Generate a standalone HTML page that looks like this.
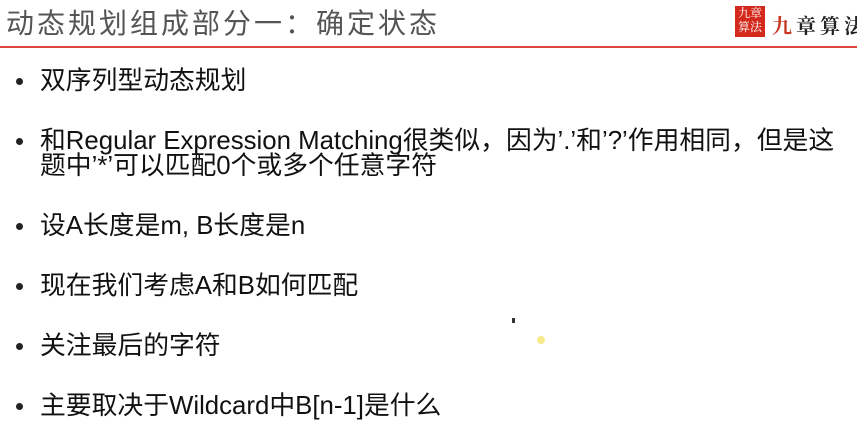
<!DOCTYPE html>
<html><head><meta charset="utf-8"><style>
html,body{margin:0;padding:0;}
body{width:857px;height:436px;background:#fff;position:relative;overflow:hidden;font-family:"Liberation Sans","Noto Sans CJK SC",sans-serif;color:#111;}
.t{position:absolute;left:6px;top:2px;font-size:28px;color:#555;letter-spacing:3px;white-space:nowrap;}
.rl{position:absolute;left:0;top:46px;width:857px;height:2px;background:#e0463c;}
.l{position:absolute;left:40px;font-size:25.8px;white-space:nowrap;line-height:25px;}
.b{position:absolute;left:16px;width:7px;height:7px;border-radius:50%;background:#222;}
.seal{position:absolute;left:735px;top:6px;width:30px;height:31px;background:#d42a1d;color:#fff;font-family:"Noto Serif CJK SC",serif;font-size:12px;line-height:14px;text-align:center;}
.logo{position:absolute;left:772px;top:10px;font-family:"Noto Serif CJK SC",serif;font-size:20px;font-weight:bold;color:#222;letter-spacing:4px;white-space:nowrap;}
</style></head><body>
<div class="t">动态规划组成部分一：确定状态</div>
<div class="seal">九章<br>算法</div>
<div class="logo"><span style="color:#c6361f">九</span>章算法</div>
<div class="rl"></div>

<div class="b" style="top:78px"></div><div class="l" style="top:69px">双序列型动态规划</div>
<div class="b" style="top:138px"></div><div class="l" style="top:129px">和Regular Expression Matching很类似，因为’.’和’?’作用相同，但是这</div>
<div class="l" style="top:154px">题中’*’可以匹配0个或多个任意字符</div>
<div class="b" style="top:223px"></div><div class="l" style="top:214px">设A长度是m, B长度是n</div>
<div class="b" style="top:283px"></div><div class="l" style="top:274px">现在我们考虑A和B如何匹配</div>
<div class="b" style="top:343px"></div><div class="l" style="top:334px">关注最后的字符</div>
<div class="b" style="top:403px"></div><div class="l" style="top:394px">主要取决于Wildcard中B[n-1]是什么</div>
<div style="position:absolute;left:512px;top:318px;width:3px;height:5px;background:#333"></div>
<div style="position:absolute;left:537px;top:336px;width:8px;height:8px;border-radius:50%;background:#f5e98a"></div>
</body></html>
